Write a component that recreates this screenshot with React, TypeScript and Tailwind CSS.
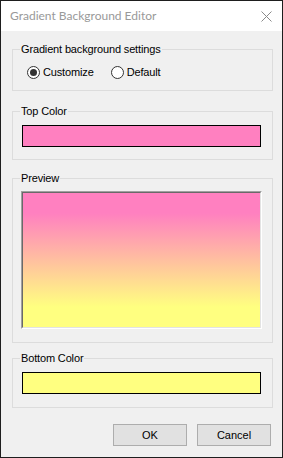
import React from "react";

const sans = { fontFamily: '"Liberation Sans", Arial, sans-serif' };

function Radio({ checked, label }: { checked: boolean; label: string }) {
  return (
    <div className="flex items-center">
      <svg width="13" height="13" viewBox="0 0 13 13" className="shrink-0">
        <circle cx="6.5" cy="6.5" r="6" fill="#ffffff" stroke="#333333" strokeWidth="1" />
        {checked && <circle cx="6.5" cy="6.5" r="3.5" fill="#333333" />}
      </svg>
      <span className="ml-[3px] text-[11px] leading-[13px] tracking-[-0.15px] text-black">{label}</span>
    </div>
  );
}

function Group({
  title,
  heightClass,
  children,
}: {
  title: string;
  heightClass: string;
  children: React.ReactNode;
}) {
  return (
    <fieldset
      className={`m-0 p-0 w-[261px] border border-[#dcdcdc] ${heightClass}`}
    >
      <legend className="ml-[7px] px-[1px] text-[11px] leading-[13px] tracking-[-0.15px] text-black">
        {title}
      </legend>
      {children}
    </fieldset>
  );
}

export default function App() {
  return (
    <div
      className="w-[283px] h-[458px] border border-[#1e1e1e] bg-[#f0f0f0] flex flex-col overflow-hidden"
      style={sans}
    >
      <div className="h-[30px] bg-white flex items-center justify-between shrink-0">
        <span
          className="ml-[9px] text-[12px] text-[#999999]"
          style={{ fontFamily: 'Lato, "Noto Sans", sans-serif' }}
        >
          Gradient Background Editor
        </span>
        <svg width="11" height="11" viewBox="0 0 11 11" className="mr-[10px] mt-[1px]">
          <path d="M0.5 0.5 L10.5 10.5 M10.5 0.5 L0.5 10.5" stroke="#8a8a8a" strokeWidth="1" />
        </svg>
      </div>

      <div className="flex flex-col pl-[11px]">
        <div className="mt-[12px]">
          <Group title="Gradient background settings" heightClass="h-[48px]">
            <div className="flex items-center mt-[10px] ml-[14px] gap-[17px]">
              <Radio checked label="Customize" />
              <Radio checked={false} label="Default" />
            </div>
          </Group>
        </div>

        <div className="mt-[14px]">
          <Group title="Top Color" heightClass="h-[55px]">
            <div className="mt-[7px] ml-[9px] w-[239px] h-[22px] border border-black bg-[#ff80c0]" />
          </Group>
        </div>

        <div className="mt-[12px]">
          <Group title="Preview" heightClass="h-[171px]">
            <div className="mt-[6px] ml-[8px] w-[241px] h-[138px] border border-t-[#a0a0a0] border-l-[#a0a0a0] border-b-white border-r-white">
              <div className="w-full h-full border border-t-[#696969] border-l-[#696969] border-b-[#e3e3e3] border-r-[#e3e3e3] bg-[linear-gradient(to_bottom,#ff80c0_15%,#ffff80_85%)]" />
            </div>
          </Group>
        </div>

        <div className="mt-[9px]">
          <Group title="Bottom Color" heightClass="h-[56px]">
            <div className="mt-[7px] ml-[9px] w-[239px] h-[22px] border border-black bg-[#ffff80]" />
          </Group>
        </div>
      </div>

      <div className="flex justify-end gap-[10px] mt-[16px] mr-[11px]">
        <button className="w-[74px] h-[22px] bg-[#e1e1e1] border border-[#adadad] text-[11px] text-black leading-none">
          OK
        </button>
        <button className="w-[74px] h-[22px] bg-[#e1e1e1] border border-[#adadad] text-[11px] text-black leading-none">
          Cancel
        </button>
      </div>
    </div>
  );
}
